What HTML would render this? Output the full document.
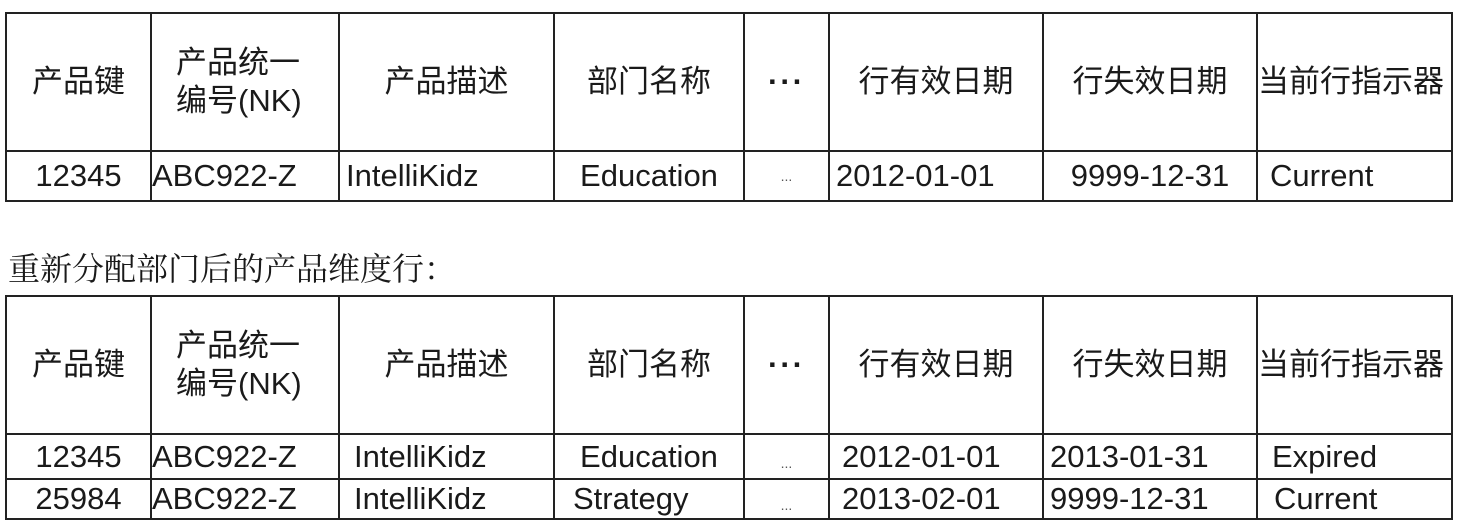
<!DOCTYPE html>
<html><head><meta charset="utf-8"><style>
body{margin:0;width:1462px;height:530px;background:#fff;position:relative;overflow:hidden;font-family:"Liberation Sans","Noto Sans CJK SC",sans-serif;color:#1a1a1a}
table{position:absolute;border-collapse:collapse;table-layout:fixed}
td{border:2px solid #222;font-size:31px;padding:0;white-space:nowrap;overflow:visible}
.h td{text-align:center;line-height:38px;font-size:31px}
.c{text-align:center}.l{padding-left:6px}
.cap{position:absolute;left:8px;top:244px;font-family:"Liberation Serif","Noto Serif CJK SC",serif;font-size:32px}
.dots{font-size:14px;color:#555}
.hd{font-weight:bold;letter-spacing:2px}
</style></head><body>
<table style="left:5px;top:12px;width:1446px">
<colgroup><col style="width:145px"><col style="width:188px"><col style="width:215px"><col style="width:190px"><col style="width:85px"><col style="width:214px"><col style="width:214px"><col style="width:195px"></colgroup>
<tr class="h" style="height:138px"><td>产品键</td><td style="text-align:left;padding-left:24px">产品统一<br>编号(NK)</td><td>产品描述</td><td>部门名称</td><td class="hd">···</td><td>行有效日期</td><td>行失效日期</td><td style="text-align:left">当前行指示器</td></tr>
<tr style="height:50px"><td class="c">12345</td><td>ABC922-Z</td><td class="l">IntelliKidz</td><td class="c">Education</td><td class="c dots">...</td><td class="l">2012-01-01</td><td class="c">9999-12-31</td><td class="l" style="padding-left:12px">Current</td></tr>
</table>
<div class="cap">重新分配部门后的产品维度行：</div>
<table style="left:5px;top:295px;width:1446px">
<colgroup><col style="width:145px"><col style="width:188px"><col style="width:215px"><col style="width:190px"><col style="width:85px"><col style="width:214px"><col style="width:214px"><col style="width:195px"></colgroup>
<tr class="h" style="height:138px"><td>产品键</td><td style="text-align:left;padding-left:24px">产品统一<br>编号(NK)</td><td>产品描述</td><td>部门名称</td><td class="hd">···</td><td>行有效日期</td><td>行失效日期</td><td style="text-align:left">当前行指示器</td></tr>
<tr style="height:45px"><td class="c">12345</td><td>ABC922-Z</td><td class="l" style="padding-left:14px">IntelliKidz</td><td class="c">Education</td><td class="c dots" style="padding-top:12px">...</td><td class="l" style="padding-left:12px">2012-01-01</td><td class="l">2013-01-31</td><td class="l" style="padding-left:14px">Expired</td></tr>
<tr style="height:40px"><td class="c">25984</td><td>ABC922-Z</td><td class="l" style="padding-left:14px">IntelliKidz</td><td class="c" style="text-align:left;padding-left:18px">Strategy</td><td class="c dots" style="padding-top:12px">...</td><td class="l" style="padding-left:12px">2013-02-01</td><td class="l">9999-12-31</td><td class="l" style="padding-left:16px">Current</td></tr>
</table>
</body></html>
